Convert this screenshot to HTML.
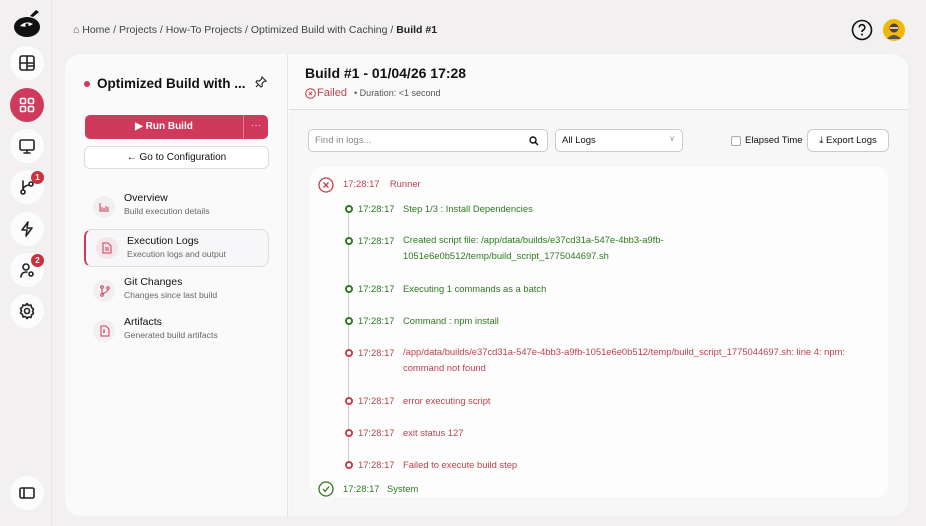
<!DOCTYPE html>
<html><head><meta charset="utf-8">
<style>
*{box-sizing:border-box;margin:0;padding:0}
body{width:926px;height:526px;overflow:hidden;background:#f2f0f1;font-family:"Liberation Sans",sans-serif;color:#111;position:relative}
.abs{position:absolute}
.sb{left:0;top:0;width:52px;height:526px;background:#f2f0f1;border-right:1px solid #e6e4e5}
.ic{position:absolute;left:10px;width:34px;height:34px;border-radius:50%;background:#fcfcfc;display:flex;align-items:center;justify-content:center}
.ic svg{width:18px;height:18px;fill:none;stroke:#222;stroke-width:1.6;stroke-linecap:round;stroke-linejoin:round}
.badge{position:absolute;left:31px;width:13px;height:13px;border-radius:50%;background:#c8323e;color:#fff;font-size:8px;font-weight:bold;text-align:center;line-height:13px}
.crumb{left:73px;top:24px;font-size:10.5px;color:#444}
.card{left:65px;top:54px;width:843px;height:462px;background:#fafafa;border-radius:16px;overflow:hidden}
.lp{left:0;top:0;width:223px;height:462px;border-right:1px solid #e5e5e5}
.nav{position:absolute;left:19px;width:185px;height:38px}
.nav .t{position:absolute;left:40px;top:1px;font-size:10.5px;color:#111}
.nav .s{position:absolute;left:40px;top:15px;font-size:8.6px;color:#666}
.nav .b{position:absolute;left:9px;top:5px;width:22px;height:22px;border-radius:50%;background:#f1eff0}
.row{position:absolute;font-size:9.4px;white-space:nowrap}
.g{color:#2d7a1f}.r{color:#c2414b}
.dot{position:absolute;width:8px;height:8px;border-radius:50%;border:2px solid}
</style></head><body>
<div class="abs sb">
  <svg class="abs" style="left:10px;top:7px" width="34" height="34" viewBox="0 0 34 34"><path d="M20 9 L26 3 L29 5 L23 10Z" fill="#111"/><ellipse cx="17" cy="20" rx="13" ry="10" fill="#111"/><path d="M10 19 Q16 13 23 17 Q17 21 10 19Z" fill="#fff"/><circle cx="17" cy="18" r="1.6" fill="#111"/></svg>
  <div class="ic" style="top:46px"><svg viewBox="0 0 18 18"><rect x="2" y="2" width="14" height="14" rx="2"/><path d="M2 9h14M9 2v14M9 12h7"/></svg></div>
  <div class="ic" style="top:88px;background:#cf3a5c"><svg viewBox="0 0 18 18" style="stroke:#fff"><rect x="2.5" y="2.5" width="5" height="5" rx="1"/><rect x="10.5" y="2.5" width="5" height="5" rx="1"/><rect x="2.5" y="10.5" width="5" height="5" rx="1"/><rect x="10.5" y="10.5" width="5" height="5" rx="1"/></svg></div>
  <div class="ic" style="top:129px"><svg viewBox="0 0 18 18"><rect x="2" y="3" width="14" height="10" rx="1.5"/><path d="M9 13v3M6 16h6"/></svg></div>
  <div class="ic" style="top:170px"><svg viewBox="0 0 18 18"><circle cx="5" cy="14" r="2"/><path d="M5 12V3M5 12q0-4 6-5"/><circle cx="13" cy="6" r="2"/></svg></div>
  <div class="badge" style="top:171px">1</div>
  <div class="ic" style="top:212px"><svg viewBox="0 0 18 18"><path d="M10 2L4 10h5l-1 6 6-8H9z"/></svg></div>
  <div class="ic" style="top:253px"><svg viewBox="0 0 18 18"><circle cx="8" cy="6" r="3"/><path d="M3 16q0-5 6-5"/><circle cx="13" cy="13" r="2"/></svg></div>
  <div class="badge" style="top:254px">2</div>
  <div class="ic" style="top:294px"><svg viewBox="0 0 18 18"><circle cx="9" cy="9" r="2.5"/><path d="M9 1.5l1.5 2 2.5-.5.5 2.5 2 1.5-1 2.3 1 2.2-2 1.5-.5 2.5-2.5-.5L9 16.5 7.5 14.5 5 15l-.5-2.5-2-1.5 1-2.2-1-2.3 2-1.5L5 3l2.5.5z"/></svg></div>
  <div class="ic" style="top:476px"><svg viewBox="0 0 18 18"><rect x="2" y="4" width="14" height="10" rx="1.5"/><path d="M6 4v10"/></svg></div>
</div>
<div class="abs crumb">⌂ Home / Projects / How-To Projects / Optimized Build with Caching / <b style="font-weight:600;color:#222">Build #1</b></div>
<svg class="abs" style="left:851px;top:19px" width="22" height="22" viewBox="0 0 22 22"><circle cx="11" cy="11" r="9.5" fill="none" stroke="#111" stroke-width="1.6"/><path d="M8.2 8.5a2.8 2.8 0 1 1 4 2.5c-.9.5-1.2 1-1.2 2" fill="none" stroke="#111" stroke-width="1.6"/><circle cx="11" cy="15.5" r="1" fill="#111"/></svg>
<svg class="abs" style="left:883px;top:19px" width="22" height="22" viewBox="0 0 22 22"><circle cx="11" cy="11" r="11" fill="#f2b705"/><circle cx="11" cy="9" r="4.5" fill="#444"/><rect x="7" y="8" width="8" height="2" fill="#f0c0a0"/><path d="M4 20q7-8 14 0" fill="#555"/></svg>

<div class="abs card">
  <div class="abs lp">
    <div class="abs" style="left:19px;top:27px;width:6px;height:6px;border-radius:50%;background:#cf3a5c"></div>
    <div class="abs" style="left:32px;top:22px;font-size:13.5px;font-weight:bold;white-space:nowrap">Optimized Build with ...</div>
    <svg class="abs" style="left:190px;top:22px" width="12" height="12" viewBox="0 0 12 12"><path d="M7 1l4 4-2 .5-2 2 .3 2.5L6 11 1 6l1-1.3 2.5.3 2-2z M3.5 8.5L1 11" fill="none" stroke="#222" stroke-width="1.1"/></svg>
    <div class="abs" style="left:20px;top:61px;width:183px;height:24px;background:#cf3a5c;border-radius:5px;color:#fff;font-size:10px;font-weight:bold">
      <div class="abs" style="left:0;top:0;width:158px;height:24px;text-align:center;line-height:24px">▶ Run Build</div>
      <div class="abs" style="left:158px;top:0;width:1px;height:24px;background:#e27a90"></div>
      <div class="abs" style="left:159px;top:0;width:24px;height:24px;text-align:center;line-height:22px;font-weight:normal;color:#f3c6d0">···</div>
    </div>
    <div class="abs" style="left:19px;top:92px;width:185px;height:23px;border:1px solid #ddd;border-radius:6px;background:#fff;text-align:center;line-height:21px;font-size:10px">← Go to Configuration</div>
    <div class="nav" style="top:137px"><div class="b"></div><svg class="abs" style="left:15px;top:11px" width="11" height="10"><path d="M1 1v8h9M3 8V5M5 8V6M7 8V4M9 8V5" stroke="#cf3a5c" fill="none" stroke-width="1"/></svg><div class="t">Overview</div><div class="s">Build execution details</div></div>
    <div class="nav" style="top:175px;left:19px;height:38px;border:1px solid #ddd;border-left:2px solid #cf3a5c;border-radius:8px;background:#f7f7f9"><div class="b" style="left:10px;top:7px;background:#f3e6ea"></div><svg class="abs" style="left:16px;top:12px" width="10" height="12"><path d="M1 1h5l3 3v7H1z M3 6h4M3 8h4" stroke="#cf3a5c" fill="none" stroke-width="1"/></svg><div class="t" style="left:41px;top:5px">Execution Logs</div><div class="s" style="left:41px;top:19px">Execution logs and output</div></div>
    <div class="nav" style="top:221px"><div class="b"></div><svg class="abs" style="left:15px;top:10px" width="11" height="12"><circle cx="3" cy="2" r="1.3" stroke="#cf3a5c" fill="none"/><circle cx="3" cy="10" r="1.3" stroke="#cf3a5c" fill="none"/><circle cx="9" cy="3" r="1.3" stroke="#cf3a5c" fill="none"/><path d="M3 3v6M9 4q0 3-6 5" stroke="#cf3a5c" fill="none"/></svg><div class="t">Git Changes</div><div class="s">Changes since last build</div></div>
    <div class="nav" style="top:261px"><div class="b"></div><svg class="abs" style="left:16px;top:10px" width="10" height="12"><path d="M1 1h5l3 3v7H1z M4 4v4M3 7h2" stroke="#cf3a5c" fill="none" stroke-width="1"/></svg><div class="t">Artifacts</div><div class="s">Generated build artifacts</div></div>
  </div>
  <div class="abs" style="left:240px;top:11px;font-size:14px;font-weight:600">Build #1 - 01/04/26 17:28</div>
  <svg class="abs" style="left:240px;top:34px" width="11" height="11"><circle cx="5.5" cy="5.5" r="4.8" stroke="#c2414b" fill="none"/><path d="M3.8 3.8l3.4 3.4M7.2 3.8l-3.4 3.4" stroke="#c2414b"/></svg>
  <div class="abs" style="left:252px;top:33px;font-size:11px;color:#c2414b">Failed <span style="color:#555;font-size:9px;margin-left:4px">• Duration: &lt;1 second</span></div>
  <div class="abs" style="left:224px;top:55px;width:619px;height:1px;background:#ddd"></div>
  <div class="abs" style="left:224px;top:56px;width:619px;height:406px;background:#f7f7f8"></div>
  <div class="abs" style="left:243px;top:75px;width:240px;height:23px;border:1px solid #ccc;border-radius:5px;background:#fff;font-size:9.5px;color:#888;padding:5px 6px">Find in logs...<svg class="abs" style="right:8px;top:6px" width="10" height="10"><circle cx="4" cy="4" r="3" stroke="#111" fill="none" stroke-width="1.4"/><path d="M6.3 6.3L9 9" stroke="#111" stroke-width="1.5"/></svg></div>
  <div class="abs" style="left:490px;top:75px;width:128px;height:23px;border:1px solid #ccc;border-radius:5px;background:#fff;font-size:9.5px;padding:5px 6px">All Logs<span class="abs" style="right:7px;top:4px;color:#999;font-size:8px">∨</span></div>
  <div class="abs" style="left:666px;top:82px;width:10px;height:10px;border:1px solid #aaa;border-radius:2px;background:#fff"></div>
  <div class="abs" style="left:680px;top:81px;font-size:9.5px">Elapsed Time</div>
  <div class="abs" style="left:742px;top:75px;width:82px;height:23px;border:1px solid #ccc;border-radius:6px;background:#fff;font-size:9.5px;text-align:center;line-height:21px">⤓ Export Logs</div>
  <div class="abs" style="left:245px;top:113px;width:578px;height:330px;background:#fdfdfd;border-radius:12px"></div>
</div>
<div class="abs" style="left:348px;top:209px;width:1px;height:258px;background:#ccc"></div>
<svg class="abs" style="left:318px;top:177px" width="16" height="16"><circle cx="8" cy="8" r="7" stroke="#c2414b" fill="none" stroke-width="1.3"/><path d="M5.5 5.5l5 5M10.5 5.5l-5 5" stroke="#c2414b" stroke-width="1.3"/></svg>
<div class="row r" style="left:343px;top:178px">17:28:17 &nbsp;&nbsp;&nbsp;Runner</div>
<div class="dot" style="left:345px;top:205px;border-color:#2d7a1f;background:#fff"></div><div class="row g" style="left:358px;top:203px">17:28:17</div><div class="row g" style="left:403px;top:203px">Step 1/3 : Install Dependencies</div>
<div class="dot" style="left:345px;top:237px;border-color:#2d7a1f;background:#fff"></div><div class="row g" style="left:358px;top:235px">17:28:17</div><div class="row g" style="left:403px;top:232px;line-height:16px">Created script file: /app/data/builds/e37cd31a-547e-4bb3-a9fb-<br>1051e6e0b512/temp/build_script_1775044697.sh</div>
<div class="dot" style="left:345px;top:285px;border-color:#2d7a1f;background:#fff"></div><div class="row g" style="left:358px;top:283px">17:28:17</div><div class="row g" style="left:403px;top:283px">Executing 1 commands as a batch</div>
<div class="dot" style="left:345px;top:317px;border-color:#2d7a1f;background:#fff"></div><div class="row g" style="left:358px;top:315px">17:28:17</div><div class="row g" style="left:403px;top:315px">Command : npm install</div>
<div class="dot" style="left:345px;top:349px;border-color:#c2414b;background:#fff"></div><div class="row r" style="left:358px;top:347px">17:28:17</div><div class="row r" style="left:403px;top:344px;line-height:16px">/app/data/builds/e37cd31a-547e-4bb3-a9fb-1051e6e0b512/temp/build_script_1775044697.sh: line 4: npm:<br>command not found</div>
<div class="dot" style="left:345px;top:397px;border-color:#c2414b;background:#fff"></div><div class="row r" style="left:358px;top:395px">17:28:17</div><div class="row r" style="left:403px;top:395px">error executing script</div>
<div class="dot" style="left:345px;top:429px;border-color:#c2414b;background:#fff"></div><div class="row r" style="left:358px;top:427px">17:28:17</div><div class="row r" style="left:403px;top:427px">exit status 127</div>
<div class="dot" style="left:345px;top:461px;border-color:#c2414b;background:#fff"></div><div class="row r" style="left:358px;top:459px">17:28:17</div><div class="row r" style="left:403px;top:459px">Failed to execute build step</div>
<svg class="abs" style="left:318px;top:481px" width="16" height="16"><circle cx="8" cy="8" r="7" stroke="#2d7a1f" fill="none" stroke-width="1.3"/><path d="M5 8l2 2.5 4-5" stroke="#2d7a1f" fill="none" stroke-width="1.3"/></svg>
<div class="row g" style="left:343px;top:483px">17:28:17</div><div class="row g" style="left:387px;top:483px">System</div>
</body></html>
